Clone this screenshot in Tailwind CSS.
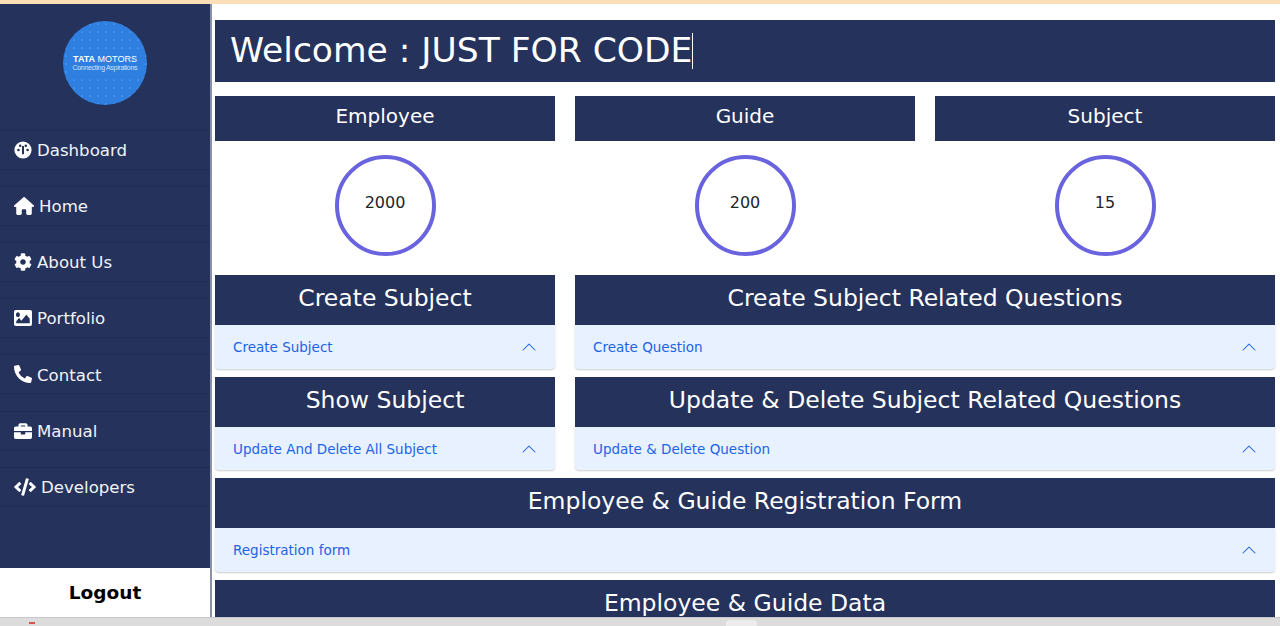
<!DOCTYPE html>
<html lang="en">
<head>
  <meta charset="UTF-8" />
  <meta name="viewport" content="width=device-width, initial-scale=1.0" />
  <title>Dashboard</title>
  <script src="https://cdn.jsdelivr.net/npm/@tailwindcss/browser@4"></script>
</head>
<body class="bg-white h-[626px] overflow-hidden font-['DejaVu_Sans',sans-serif] flex flex-col">
  <div class="h-1 bg-[#fbdfb9] shrink-0"></div>
  <div class="flex h-[613px] shrink-0 overflow-hidden">
    <!-- Sidebar -->
    <aside class="w-[212px] shrink-0 bg-[#25325b] border-r-2 border-[#8a90a8] flex flex-col text-[#f1f3f8]">
      <div class="h-[125px] shrink-0 flex justify-center pt-4">
        <svg width="86" height="86" viewBox="0 0 86 86" class="ml-[-1px]">
          <defs>
            <pattern id="dots" width="8" height="8" patternUnits="userSpaceOnUse">
              <circle cx="4" cy="4" r="0.6" fill="#8fbdf2"></circle>
            </pattern>
          </defs>
          <circle cx="43" cy="43" r="42" fill="#2f7fe0"></circle>
          <circle cx="43" cy="43" r="42" fill="url(#dots)"></circle>
          <rect x="7" y="33" width="72" height="21" fill="#2f7fe0"></rect>
          <text x="43" y="41.5" text-anchor="middle" font-size="9" fill="#fff" font-family="Liberation Sans"><tspan font-weight="700">TATA</tspan> MOTORS</text>
          <text x="43" y="50" text-anchor="middle" font-size="7" fill="#cfe2fa" font-family="Liberation Sans" textLength="65">Connecting Aspirations</text>
        </svg>
      </div>
      <nav class="flex flex-col text-[16.6px]">
        <a class="h-10 mt-[1px] mb-4 border-y border-[#212c52] flex items-center pl-[14px] gap-[5px]">
          <svg class="w-[18px] h-[18px]" viewBox="0 0 18 18"><circle cx="9" cy="9" r="8.6" fill="#fff"></circle><circle cx="4.4" cy="9" r="1.3" fill="#25325b"></circle><circle cx="13.6" cy="9" r="1.3" fill="#25325b"></circle><circle cx="6.2" cy="4.8" r="1.3" fill="#25325b"></circle><circle cx="11.8" cy="4.8" r="1.3" fill="#25325b"></circle><path d="M8 5h2v7.5a1 1 0 1 1-2 0z" fill="#25325b"></path></svg>
          <span class="pt-[2px]">Dashboard</span>
        </a>
        <a class="h-10 mb-4 border-y border-[#212c52] flex items-center pl-[14px] gap-[5px]">
          <svg class="w-5 h-[18px] fill-white" viewBox="0 0 576 512"><path d="M575.8 255.5c0 18-15 32.1-32 32.1h-32l.7 160.2c0 2.7-.2 5.4-.5 8.1V472c0 22.1-17.9 40-40 40H456c-1.1 0-2.2 0-3.3-.1c-1.4 .1-2.8 .1-4.2 .1H416 392c-22.1 0-40-17.9-40-40V448 384c0-17.7-14.3-32-32-32H256c-17.7 0-32 14.3-32 32v64 24c0 22.1-17.9 40-40 40H160 128.1c-1.5 0-3-.1-4.5-.2c-1.2 .1-2.4 .2-3.6 .2H104c-22.1 0-40-17.9-40-40V360c0-.9 0-1.9 .1-2.8V287.6H32c-18 0-32-14-32-32.1c0-9 3-17 10-24L266.4 8c7-7 15-8 22-8s15 2 21 7L564.8 231.5c8 7 12 15 11 24z"></path></svg>
          <span class="pt-[2px]">Home</span>
        </a>
        <a class="h-10 mb-4 border-y border-[#212c52] flex items-center pl-[14px] gap-[5px]">
          <svg class="w-[18px] h-[18px] fill-white" viewBox="0 0 512 512"><path d="M487.4 315.7l-42.6-24.6c4.3-23.2 4.3-47 0-70.2l42.6-24.6c4.9-2.8 7.1-8.6 5.5-14-11.1-35.6-30-67.8-54.7-94.6-3.8-4.1-10-5.1-14.8-2.3L380.8 110c-17.9-15.4-38.5-27.3-60.8-35.1V25.8c0-5.6-3.9-10.5-9.4-11.7-36.7-8.2-74.3-7.8-109.2 0-5.5 1.2-9.4 6.1-9.4 11.7V75c-22.2 7.9-42.8 19.8-60.8 35.1L88.7 85.5c-4.9-2.8-11-1.9-14.8 2.3-24.7 26.7-43.6 58.9-54.7 94.6-1.7 5.4.6 11.2 5.5 14L67.3 221c-4.3 23.2-4.3 47 0 70.2l-42.6 24.6c-4.9 2.8-7.1 8.6-5.5 14 11.1 35.6 30 67.8 54.7 94.6 3.8 4.1 10 5.1 14.8 2.3l42.6-24.6c17.9 15.4 38.5 27.3 60.8 35.1v49.2c0 5.6 3.9 10.5 9.4 11.7 36.7 8.2 74.3 7.8 109.2 0 5.5-1.2 9.4-6.1 9.4-11.7v-49.2c22.2-7.9 42.8-19.8 60.8-35.1l42.6 24.6c4.9 2.8 11 1.9 14.8-2.3 24.7-26.7 43.6-58.9 54.7-94.6 1.5-5.5-.7-11.3-5.6-14.1zM256 336c-44.1 0-80-35.9-80-80s35.9-80 80-80 80 35.9 80 80-35.9 80-80 80z"></path></svg>
          <span class="pt-[2px]">About Us</span>
        </a>
        <a class="h-10 mb-4 border-y border-[#212c52] flex items-center pl-[14px] gap-[5px]">
          <svg class="w-[18px] h-[18px] fill-white" viewBox="0 40 512 432" preserveAspectRatio="none"><path d="M464 448H48c-26.51 0-48-21.49-48-48V112c0-26.51 21.49-48 48-48h416c26.51 0 48 21.49 48 48v288c0 26.51-21.49 48-48 48zM112 120c-30.928 0-56 25.072-56 56s25.072 56 56 56 56-25.072 56-56-25.072-56-56-56zM64 384h384V272l-87.515-87.515c-4.686-4.686-12.284-4.686-16.971 0L208 320l-55.515-55.515c-4.686-4.686-12.284-4.686-16.971 0L64 336v48z"></path></svg>
          <span class="pt-[2px]">Portfolio</span>
        </a>
        <a class="h-10 mb-[17px] border-y border-[#212c52] flex items-center pl-[14px] gap-[5px]">
          <svg class="w-[18px] h-[18px] fill-white -scale-x-100" viewBox="0 0 512 512"><path d="M493.4 24.6l-104-24c-11.3-2.6-22.9 3.3-27.5 13.9l-48 112c-4.2 9.8-1.4 21.3 6.9 28l60.6 49.6c-36 76.7-98.9 140.5-177.2 177.2l-49.6-60.6c-6.8-8.3-18.2-11.1-28-6.9l-112 48C3.9 366.5-2 378.1.6 389.4l24 104C27.1 504.2 36.7 512 48 512c256.1 0 464-207.5 464-464 0-11.2-7.7-20.9-18.6-23.4z"></path></svg>
          <span class="pt-1">Contact</span>
        </a>
        <a class="h-10 mb-4 border-y border-[#212c52] flex items-center pl-[14px] gap-[5px]">
          <svg class="w-[18px] h-[18px] fill-white" viewBox="0 0 512 512"><path d="M320 336c0 8.84-7.16 16-16 16h-96c-8.84 0-16-7.16-16-16v-48H0v144c0 25.6 22.4 48 48 48h416c25.6 0 48-22.4 48-48V288H320v48zm144-208h-80V80c0-25.6-22.4-48-48-48H176c-25.6 0-48 22.4-48 48v48H48c-25.6 0-48 22.4-48 48v80h512v-80c0-25.6-22.4-48-48-48zm-144 0H192V96h128v32z"></path></svg>
          <span class="pt-[2px]">Manual</span>
        </a>
        <a class="h-10 border-y border-[#212c52] flex items-center pl-[14px] gap-[5px]">
          <svg class="w-[22px] h-[18px] fill-white" viewBox="0 0 640 512"><path d="M278.9 511.5l-61-17.7c-6.4-1.8-10-8.5-8.2-14.9L346.2 8.7c1.8-6.4 8.5-10 14.9-8.2l61 17.7c6.4 1.8 10 8.5 8.2 14.9L293.8 503.3c-1.9 6.4-8.5 10.1-14.9 8.2zm-114-112.2l43.5-46.4c4.6-4.9 4.3-12.7-.8-17.2L117 256l90.6-79.7c5.1-4.5 5.5-12.3.8-17.2l-43.5-46.4c-4.5-4.8-12.1-5.1-17-.5L3.8 247.2c-5.1 4.7-5.1 12.8 0 17.5l144.1 135.1c4.9 4.6 12.5 4.4 17-.5zm327.2.6l144.1-135.1c5.1-4.7 5.1-12.8 0-17.5L492.1 112.1c-4.8-4.5-12.4-4.3-17 .5L431.6 159c-4.6 4.9-4.3 12.7.8 17.2L523 256l-90.6 79.7c-5.1 4.5-5.5 12.3-.8 17.2l43.5 46.4c4.5 4.9 12.1 5.1 17 .6z"></path></svg>
          <span class="pt-[2px]">Developers</span>
        </a>
      </nav>
      <div class="mt-auto h-[49px] bg-white text-black font-bold text-[18.5px] flex items-center justify-center pt-[1px]">Logout</div>
    </aside>

    <!-- Main -->
    <main class="flex-1 min-w-0 pl-[3px] pr-[5px] pt-4">
      <div class="h-[62px] bg-[#25325b] text-white text-[34.5px] flex items-center pl-[15px]">
        <span>Welcome : JUST FOR CODE</span><span class="w-px h-9 bg-white"></span>
      </div>

      <div class="grid grid-cols-3 gap-x-5 mt-[14px]">
        <div>
          <div class="h-[45px] bg-[#25325b] text-white text-[20px] flex items-center justify-center pb-[5px]">Employee</div>
          <div class="h-[134px] flex items-center justify-center"><div class="w-[101px] h-[101px] rounded-full border-4 border-[#6a63df] flex items-center justify-center text-[16px] text-[#212529] mb-[5px] pb-[6px]">2000</div></div>
        </div>
        <div>
          <div class="h-[45px] bg-[#25325b] text-white text-[20px] flex items-center justify-center pb-[5px]">Guide</div>
          <div class="h-[134px] flex items-center justify-center"><div class="w-[101px] h-[101px] rounded-full border-4 border-[#6a63df] flex items-center justify-center text-[16px] text-[#212529] mb-[5px] pb-[6px]">200</div></div>
        </div>
        <div>
          <div class="h-[45px] bg-[#25325b] text-white text-[20px] flex items-center justify-center pb-[5px]">Subject</div>
          <div class="h-[134px] flex items-center justify-center"><div class="w-[101px] h-[101px] rounded-full border-4 border-[#6a63df] flex items-center justify-center text-[16px] text-[#212529] mb-[5px] pb-[6px]">15</div></div>
        </div>

        <div class="mb-2">
          <div class="h-[50px] bg-[#25325b] text-white text-[23.5px] flex items-center justify-center pb-[3px]">Create Subject</div>
          <div class="h-[44px] bg-[#e7f1ff] rounded-b shadow-[0_1px_2px_rgba(0,0,0,0.2)] text-[#1d63e6] text-[13.5px] flex items-center justify-between pl-[18px] pr-[18px]">Create Subject
            <svg class="w-4 h-4" viewBox="0 0 16 16" fill="#1d63e6"><path fill-rule="evenodd" d="M1.646 11.354a.5.5 0 0 0 .708 0L8 5.707l5.646 5.647a.5.5 0 0 0 .708-.708l-6-6a.5.5 0 0 0-.708 0l-6 6a.5.5 0 0 0 0 .708z"></path></svg>
          </div>
        </div>
        <div class="col-span-2 mb-2">
          <div class="h-[50px] bg-[#25325b] text-white text-[23.5px] flex items-center justify-center pb-[3px]">Create Subject Related Questions</div>
          <div class="h-[44px] bg-[#e7f1ff] rounded-b shadow-[0_1px_2px_rgba(0,0,0,0.2)] text-[#1d63e6] text-[13.5px] flex items-center justify-between pl-[18px] pr-[18px]">Create Question
            <svg class="w-4 h-4" viewBox="0 0 16 16" fill="#1d63e6"><path fill-rule="evenodd" d="M1.646 11.354a.5.5 0 0 0 .708 0L8 5.707l5.646 5.647a.5.5 0 0 0 .708-.708l-6-6a.5.5 0 0 0-.708 0l-6 6a.5.5 0 0 0 0 .708z"></path></svg>
          </div>
        </div>

        <div class="mb-2">
          <div class="h-[50px] bg-[#25325b] text-white text-[23.5px] flex items-center justify-center pb-[3px]">Show Subject</div>
          <div class="h-[43px] bg-[#e7f1ff] rounded-b shadow-[0_1px_2px_rgba(0,0,0,0.2)] text-[#1d63e6] text-[13.5px] flex items-center justify-between pl-[18px] pr-[18px] pt-[1px]">Update And Delete All Subject
            <svg class="w-4 h-4" viewBox="0 0 16 16" fill="#1d63e6"><path fill-rule="evenodd" d="M1.646 11.354a.5.5 0 0 0 .708 0L8 5.707l5.646 5.647a.5.5 0 0 0 .708-.708l-6-6a.5.5 0 0 0-.708 0l-6 6a.5.5 0 0 0 0 .708z"></path></svg>
          </div>
        </div>
        <div class="col-span-2 mb-2">
          <div class="h-[50px] bg-[#25325b] text-white text-[23.5px] flex items-center justify-center pb-[3px]">Update &amp; Delete Subject Related Questions</div>
          <div class="h-[43px] bg-[#e7f1ff] rounded-b shadow-[0_1px_2px_rgba(0,0,0,0.2)] text-[#1d63e6] text-[13.5px] flex items-center justify-between pl-[18px] pr-[18px] pt-[1px]">Update &amp; Delete Question
            <svg class="w-4 h-4" viewBox="0 0 16 16" fill="#1d63e6"><path fill-rule="evenodd" d="M1.646 11.354a.5.5 0 0 0 .708 0L8 5.707l5.646 5.647a.5.5 0 0 0 .708-.708l-6-6a.5.5 0 0 0-.708 0l-6 6a.5.5 0 0 0 0 .708z"></path></svg>
          </div>
        </div>

        <div class="col-span-3 mb-2">
          <div class="h-[50px] bg-[#25325b] text-white text-[23.5px] flex items-center justify-center pb-[3px]">Employee &amp; Guide Registration Form</div>
          <div class="h-[44px] bg-[#e7f1ff] rounded-b shadow-[0_1px_2px_rgba(0,0,0,0.2)] text-[#1d63e6] text-[13.5px] flex items-center justify-between pl-[18px] pr-[18px]">Registration form
            <svg class="w-4 h-4" viewBox="0 0 16 16" fill="#1d63e6"><path fill-rule="evenodd" d="M1.646 11.354a.5.5 0 0 0 .708 0L8 5.707l5.646 5.647a.5.5 0 0 0 .708-.708l-6-6a.5.5 0 0 0-.708 0l-6 6a.5.5 0 0 0 0 .708z"></path></svg>
          </div>
        </div>

        <div class="col-span-3">
          <div class="h-[50px] bg-[#25325b] text-white text-[23.5px] flex items-center justify-center pb-[3px]">Employee &amp; Guide Data</div>
        </div>
      </div>
    </main>
  </div>
  <div class="h-[9px] shrink-0 bg-[#dcdcdc] border-t border-[#c8c8c8] flex items-start">
    <div class="ml-[29px] mt-1 w-[6px] h-[2px] bg-[#d9534f]"></div>
    <div class="ml-[691px] mt-[2px] w-[31px] h-[6px] bg-[#ececec] rounded-t"></div>
  </div>
</body>
</html>
